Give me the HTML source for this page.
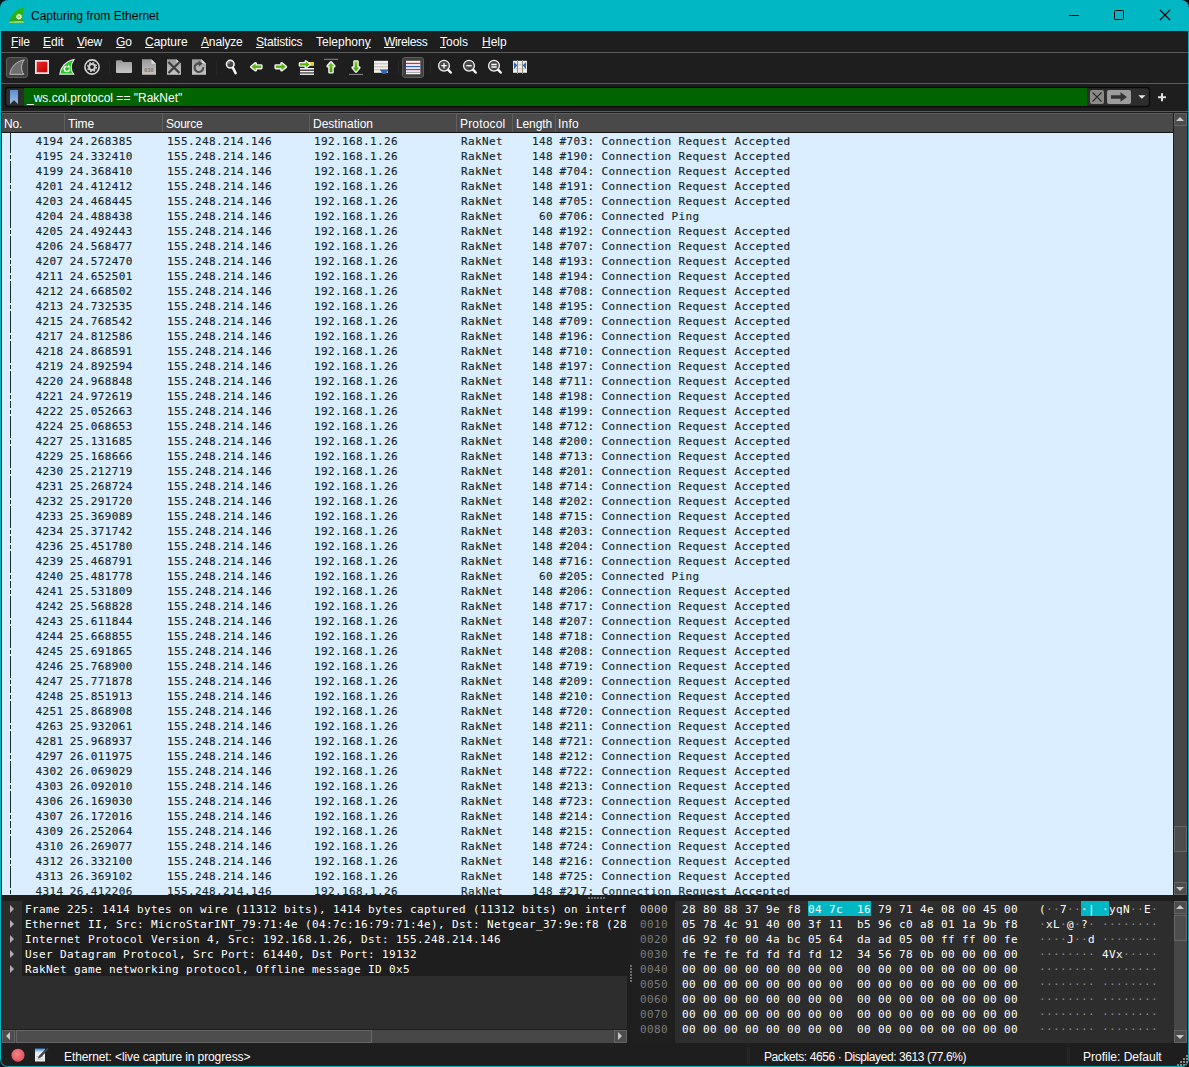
<!DOCTYPE html>
<html lang="en"><head><meta charset="utf-8"><title>Capturing from Ethernet</title>
<style>
*{box-sizing:border-box;margin:0;padding:0}
html,body{width:1189px;height:1067px;overflow:hidden;background:#04141c}
body{position:relative;font-family:"Liberation Sans",sans-serif;font-size:12px;color:#fff}
#win{position:absolute;left:0;top:0;width:1189px;height:1067px;background:#00b7c3;border-radius:8px;overflow:hidden}
#inner{position:absolute;left:1px;top:31px;width:1187px;height:1035px;background:#1e1e1e;border-radius:0 0 7px 7px}
.abs{position:absolute}
#title{position:absolute;left:31px;top:9px;font-size:12px;color:#000;line-height:15px;white-space:nowrap}
.hl{position:absolute;left:1px;width:1187px;height:1px;background:#5a5a5a}
/* menu */
#menu{position:absolute;left:0;top:31px;height:21px;width:1189px;white-space:nowrap}
#menu span{position:absolute;top:4px;line-height:14px;font-size:12px;color:#fff}
#menu u{text-decoration:underline;text-underline-offset:1px}
/* packet list */
#hdr{position:absolute;left:2px;top:113px;width:1171px;height:19px;background:#494949;box-shadow:inset 0 1px 0 #5c5c5c}
#hdr span{position:absolute;top:4px;line-height:14px;font-size:12px;color:#fff;white-space:nowrap}
#hdr i{position:absolute;top:0;width:1px;height:19px;background:#5f5f5f}
#plist{position:absolute;left:2px;top:132px;width:1171px;height:763px;background:#daeeff;overflow:hidden;border-top:1px solid #141414;padding-top:1px;
 font-family:"DejaVu Sans Mono","Liberation Mono",monospace;font-size:11px;letter-spacing:0.3774px;color:#12272e}
#rel{position:absolute;left:8px;top:0px;width:1px;height:762px;background:#1c2c34}
.r{-webkit-text-stroke:0.15px #12272e;position:relative;height:15px;line-height:15px;white-space:pre}
.r.d::before{content:"";position:absolute;left:8px;top:4px;width:1px;height:2px;background:#daeeff;box-shadow:0 6px 0 #daeeff}
.c{position:absolute;top:0}
.no{left:0;width:61.4px;text-align:right}
.tm{left:67.7px}
.src{left:165px}
.dst{left:312px}
.pr{left:459px}
.ln{left:511px;width:40px;text-align:right}
.inf{left:557.4px}
/* scrollbars */
.vsb,.hsb{position:absolute;background:#474747}
.vsb{width:13px}
.sbtn{position:absolute;background:#4d4d4d;border:1px solid #636363}
.thumb{position:absolute;background:#4d4d4d;border:1px solid #666}
.sbtn i{position:absolute;width:0;height:0}
.au{left:1px;top:3px;border-left:4px solid transparent;border-right:4px solid transparent;border-bottom:4px solid #c8c8c8}
.ad{left:1px;top:4px;border-left:4px solid transparent;border-right:4px solid transparent;border-top:4px solid #c8c8c8}
.al{left:3px;top:1px;border-top:4px solid transparent;border-bottom:4px solid transparent;border-right:4px solid #c8c8c8}
.ar{left:3px;top:1px;border-top:4px solid transparent;border-bottom:4px solid transparent;border-left:4px solid #c8c8c8}
/* details */
.mono,#det,#hex{font-family:"DejaVu Sans Mono","Liberation Mono",monospace;font-size:11px;letter-spacing:0.3774px;color:#fff}
#det{position:absolute;left:2px;top:901px;width:625px;height:128px;background:#2d2d2d;overflow:hidden}
#det .dr{position:absolute;left:20px;width:605px;height:15px;line-height:17px;background:#1e1e1e;white-space:pre;padding-left:3px;overflow:hidden}
#det .tri{position:absolute;left:8px;width:0;height:0;border-left:4.6px solid #b0b0b0;border-top:4px solid transparent;border-bottom:4px solid transparent;margin-top:-0.5px}
#hex{position:absolute;left:632px;top:901px;width:542px;height:142px;background:#2d2d2d;overflow:hidden}
#hex .off{position:absolute;left:0;top:0;width:43px;height:142px;background:#1f1f1f}
#hex .hr{position:absolute;left:0;height:15px;line-height:17px;white-space:pre}
#hex .o{position:absolute;left:8px;color:#7c7c7c}
#hex .o0{color:#cfcfcf}
#hex .h{position:absolute;left:50px}
#hex .a{position:absolute;left:407px}
#hex .d{color:#8a8a8a}
#hex .sel{background:#00b7c3;padding:2px 0 0}
#hex .sel .d{color:#fff}
#status{position:absolute;left:1px;top:1044px;width:1187px;height:22px;background:#1e1e1e;border-radius:0 0 7px 7px}
#status span{position:absolute;top:6px;line-height:14px;font-size:12px;color:#fff;white-space:nowrap}
.ssep{position:absolute;top:3px;width:1px;height:17px;background:#2b2b2b}
#ftext{position:absolute;left:27px;top:91px;line-height:14px;font-size:12px;color:#fff;white-space:nowrap}
.grip i{position:absolute;width:2px;height:2px;background:#6c6c6c}

</style></head><body>
<div id="win">
<div id="inner"></div>
<div id="title">Capturing from Ethernet</div>
<div id="menu">
<span style="left:11px;letter-spacing:-0.15px"><u>F</u>ile</span>
<span style="left:43px"><u>E</u>dit</span>
<span style="left:77px;letter-spacing:-0.2px"><u>V</u>iew</span>
<span style="left:116px"><u>G</u>o</span>
<span style="left:145px"><u>C</u>apture</span>
<span style="left:201px;letter-spacing:-0.15px"><u>A</u>nalyze</span>
<span style="left:256px;letter-spacing:-0.17px"><u>S</u>tatistics</span>
<span style="left:316px">Telephon<u>y</u></span>
<span style="left:384px;letter-spacing:-0.33px"><u>W</u>ireless</span>
<span style="left:440px"><u>T</u>ools</span>
<span style="left:482px"><u>H</u>elp</span>
</div>
<div class="hl" style="top:52px"></div>
<div class="hl" style="top:83px"></div>
<div class="hl" style="top:111px"></div>
<svg class="abs" style="left:0;top:0" width="1189" height="112" viewBox="0 0 1189 112">
<defs>
<linearGradient id="gRed" x1="0" y1="0" x2="1" y2="1"><stop offset="0" stop-color="#ee2a2a"/><stop offset="1" stop-color="#c00000"/></linearGradient>
<linearGradient id="gGrey" x1="0" y1="0" x2="0" y2="1"><stop offset="0" stop-color="#9a9a9a"/><stop offset="1" stop-color="#c6c6c6"/></linearGradient>
<linearGradient id="gGrn" x1="0" y1="0" x2="0" y2="1"><stop offset="0" stop-color="#7ed321"/><stop offset="1" stop-color="#3f9a00"/></linearGradient>
<linearGradient id="gFin" x1="0" y1="0" x2="0" y2="1"><stop offset="0" stop-color="#2cba06"/><stop offset="1" stop-color="#2ea418"/></linearGradient>
<linearGradient id="gBm" x1="0" y1="0" x2="0" y2="1"><stop offset="0" stop-color="#5d8fcc"/><stop offset="1" stop-color="#9dbde6"/></linearGradient>
</defs>
<!-- title icon -->
<path d="M24.700 7.200 C16.500 8.500 10.800 14.500 9.100 22.900 L24.100 22.900 C21.900 19 22 12 24.700 7.200 Z" fill="url(#gFin)"/>
<path d="M9.100 22.900 L24.100 22.900 L23.300 21.300 C19 20.600 13.500 21 9.700 21.600 Z" fill="#8fd47c"/>
<circle cx="19" cy="16.700" r="2.500" fill="#dff0dc" stroke="#dff0dc" stroke-width="1" stroke-dasharray="1 0.960"/>
<circle cx="19" cy="16.700" r="0.900" fill="#6cc060"/>
<!-- window buttons -->
<path d="M1069 15.5 H1079" stroke="#000" stroke-width="1"/>
<rect x="1114.5" y="10.5" width="9" height="9" rx="1" fill="none" stroke="#000" stroke-width="1"/>
<path d="M1160 10 L1170 20 M1170 10 L1160 20" stroke="#000" stroke-width="1.1"/>
<!-- toolbar: selected button 1 -->
<rect x="6.5" y="57.5" width="21" height="20" rx="2.5" fill="#404040" stroke="#5c5c5c"/>
<path d="M24.3 59.8 C15.5 61.5 10.8 67.5 9.8 74.3 L23.8 74.3 C20.6 70 20.8 64.5 24.3 59.8 Z" fill="#6e6e6e" stroke="#bcbcbc" stroke-width="1"/>
<!-- stop -->
<rect x="35" y="60" width="14" height="14" fill="#e6e6e6"/>
<rect x="36.7" y="61.7" width="10.6" height="10.6" fill="url(#gRed)"/>
<!-- restart fin -->
<path d="M74 59.5 C65.2 61.2 60.6 67.5 59.8 74.2 L73.6 74.2 C70.4 70 70.6 64.5 74 59.5 Z" fill="#20c820" stroke="#e4e4e4" stroke-width="1.2"/>
<path d="M69.6 68.6 A2.7 2.7 0 1 1 66.6 66.2" fill="none" stroke="#fff" stroke-width="1.4"/>
<path d="M68.6 64.6 L70.4 67.4 L67 67.4 Z" fill="#fff"/>
<!-- gear -->
<circle cx="92" cy="67" r="7.1" fill="none" stroke="#d6d6d6" stroke-width="1.6"/>
<circle cx="92" cy="67" r="4.4" fill="none" stroke="#cdcdcd" stroke-width="1.4" stroke-dasharray="1.73 1.73"/>
<circle cx="92" cy="67" r="2.9" fill="none" stroke="#cdcdcd" stroke-width="2"/>
<rect x="109" y="60" width="1" height="14" fill="#272727"/>
<!-- folder -->
<path d="M116 61.2 Q116 60.2 117 60.2 L121.5 60.2 L123 62 L131 62 Q132 62 132 63 L132 72 Q132 73 131 73 L117 73 Q116 73 116 72 Z" fill="url(#gGrey)"/>
<!-- file 010 -->
<path d="M142 59.3 H151.5 L156 63.8 V74.7 H142 Z" fill="url(#gGrey)"/>
<path d="M151.5 59.3 L151.5 63.8 L156 63.8 Z" fill="#dcdcdc"/>
<text x="144.2" y="72" font-family="Liberation Sans, sans-serif" font-size="5.3" letter-spacing="0.25" fill="#707070" font-weight="bold">010</text>
<!-- file X -->
<path d="M167 59.3 H176.5 L181 63.8 V74.7 H167 Z" fill="url(#gGrey)"/>
<path d="M176.500 59.3 L176.500 63.8 L181 63.8 Z" fill="#dcdcdc"/>
<path d="M168.500 62 L179.500 73 M179.500 62 L168.500 73" stroke="#3c3c3c" stroke-width="2.2"/>
<!-- file reload -->
<path d="M192 59.3 H201.5 L206 63.8 V74.7 H192 Z" fill="url(#gGrey)"/>
<path d="M201.500 59.3 L201.500 63.8 L206 63.8 Z" fill="#dcdcdc"/>
<path d="M203.200 67.200 A4.300 4.300 0 1 1 199.400 63.400" fill="none" stroke="#4c4c4c" stroke-width="2.100"/>
<path d="M198.600 60.600 L203 63.400 L198.800 66.600 Z" fill="#4c4c4c"/>
<rect x="216" y="60" width="1" height="14" fill="#272727"/>
<!-- find -->
<circle cx="230.300" cy="64.200" r="3.800" fill="#484848" stroke="#f0f0f0" stroke-width="1.600"/>
<circle cx="229" cy="62.800" r="1" fill="#8a8a8a"/>
<path d="M233 68 L235.600 73.200" stroke="#f6f6f6" stroke-width="2.600" stroke-linecap="round"/>
<!-- back / forward -->
<path d="M251.400 66.800 L255.600 63.400 L255.600 65.600 L261.200 65.600 L261.200 68 L255.600 68 L255.600 70.200 Z" fill="#58b410" stroke="#f4f4f4" stroke-width="2.800" stroke-linejoin="round" paint-order="stroke"/>
<path d="M285.800 66.800 L281.600 63.400 L281.600 65.600 L275.800 65.600 L275.800 68 L281.600 68 L281.600 70.200 Z" fill="#58b410" stroke="#f4f4f4" stroke-width="2.800" stroke-linejoin="round" paint-order="stroke"/>
<!-- goto -->
<rect x="300" y="62" width="14" height="3.500" fill="#f0f0f0"/>
<rect x="310" y="62" width="4" height="3.500" fill="#f0d020"/>
<rect x="300" y="68" width="14" height="1.600" fill="#f2f2f2"/>
<rect x="300" y="70.800" width="14" height="1.600" fill="#f2f2f2"/>
<rect x="300" y="73.500" width="14" height="1.400" fill="#f2f2f2"/>
<path d="M309.600 64.400 L305.800 61.400 L305.800 63.300 L300 63.300 L300 65.500 L305.800 65.500 L305.800 67.400 Z" fill="#58b410" stroke="#f4f4f4" stroke-width="2.600" stroke-linejoin="round" paint-order="stroke"/>
<!-- first -->
<rect x="324" y="58.800" width="14" height="1" fill="#8c8c8c"/>
<path d="M331 62.400 L334.200 66.200 L332.400 66.200 L332.400 72.200 L329.600 72.200 L329.600 66.200 L327.800 66.200 Z" fill="url(#gGrn)" stroke="#f6f6f6" stroke-width="2.800" stroke-linejoin="round" paint-order="stroke"/>
<!-- last -->
<rect x="349" y="73.900" width="14" height="1" fill="#8c8c8c"/>
<path d="M356 71.400 L359.200 67.600 L357.400 67.600 L357.400 61.600 L354.600 61.600 L354.600 67.600 L352.800 67.600 Z" fill="url(#gGrn)" stroke="#f6f6f6" stroke-width="2.800" stroke-linejoin="round" paint-order="stroke"/>
<!-- autoscroll -->
<rect x="374" y="60.800" width="14" height="12" fill="#f2f2ee"/>
<rect x="374" y="63.300" width="14" height="1" fill="#b9b9b0"/>
<rect x="374" y="66.300" width="14" height="1" fill="#b9b9b0"/>
<rect x="374" y="69.300" width="14" height="1" fill="#b9b9b0"/>
<path d="M379.800 69.500 L388 69.500 L388 71 L385.300 74 L382.600 74 Z" fill="#3465b4"/>
<rect x="398" y="60" width="1" height="14" fill="#272727"/>
<!-- colorize (selected) -->
<rect x="402.500" y="57.500" width="21" height="20" rx="2.500" fill="#404040" stroke="#5c5c5c"/>
<rect x="406" y="60.800" width="14.300" height="13.400" fill="#fafafa"/>
<rect x="406" y="62.800" width="14.300" height="1.300" fill="#ee2222"/>
<rect x="406" y="65.900" width="14.300" height="1.300" fill="#2f5fc8"/>
<rect x="406" y="68.900" width="14.300" height="1.300" fill="#8a3f9c"/>
<rect x="406" y="71.800" width="14.300" height="1" fill="#9a9a9a"/>
<rect x="430" y="60" width="1" height="14" fill="#272727"/>
<!-- zoom in/out/reset -->
<g><circle cx="444" cy="65.700" r="5.400" fill="#484848" stroke="#f2f2f2" stroke-width="1.300"/><path d="M448.200 69.900 L450.700 72.500" stroke="#f4f4f4" stroke-width="2.500" stroke-linecap="round"/></g>
<path d="M441.300 65.700 H446.700 M444 63 V68.400" stroke="#fff" stroke-width="1.300"/>
<circle cx="469" cy="65.700" r="5.400" fill="#484848" stroke="#f2f2f2" stroke-width="1.300"/><path d="M473.2 69.900 L475.7 72.500" stroke="#f4f4f4" stroke-width="2.500" stroke-linecap="round"/>
<path d="M466.300 65.700 H471.700" stroke="#fff" stroke-width="1.300"/>
<circle cx="494" cy="65.700" r="5.400" fill="#484848" stroke="#f2f2f2" stroke-width="1.300"/><path d="M498.2 69.900 L500.7 72.500" stroke="#f4f4f4" stroke-width="2.500" stroke-linecap="round"/>
<path d="M491.300 64.500 H496.700 M491.300 67 H496.700" stroke="#fff" stroke-width="1.300"/>
<!-- resize columns -->
<rect x="513" y="60.800" width="14" height="12" fill="#ecece6"/>
<path d="M513 64.800 H527 M513 68.800 H527" stroke="#c8c8c0" stroke-width="1"/>
<path d="M517.500 60 V74 M522.500 60 V74" stroke="#8c8c84" stroke-width="1"/>
<path d="M514 62 L517.300 65.500 L514 69 Z" fill="#2f66c0"/>
<path d="M526 62 L522.700 65.500 L526 69 Z" fill="#2f66c0"/>
<!-- filter bar -->
<rect x="5.500" y="87.500" width="1144" height="19" rx="3" fill="#2d2d2d" stroke="#0a0a0a" stroke-width="1.300"/>
<rect x="24" y="88" width="1063" height="18" fill="#006400"/>
<path d="M10 90.500 Q10 90 10.500 90 L17.500 90 Q18 90 18 90.500 L18 104 L14 100.300 L10 104 Z" fill="url(#gBm)"/>
<rect x="1090" y="90" width="14" height="14" rx="2" fill="#8a8a86"/>
<path d="M1092.500 92.500 L1101.500 101.500 M1101.500 92.500 L1092.500 101.500" stroke="#2a2a2a" stroke-width="1.100"/>
<rect x="1107" y="90" width="24" height="14" rx="2" fill="#9c9c9c"/>
<path d="M1111 95.300 H1120.500 V92.300 L1127 97 L1120.500 101.700 V98.700 H1111 Z" fill="#333"/>
<path d="M1138.300 95.300 H1145.500 L1141.900 98.800 Z" fill="#e6e6e6"/>
<path d="M1158 97.200 H1166 M1162 93.200 V101.200" stroke="#e0e0e0" stroke-width="2"/>
</svg>
<div id="ftext">_ws.col.protocol == "RakNet"</div>
<div id="hdr">
<span style="left:2px;letter-spacing:-0.2px">No.</span><i style="left:62px"></i>
<span style="left:66px">Time</span><i style="left:160px"></i>
<span style="left:164px;letter-spacing:-0.27px">Source</span><i style="left:307px"></i>
<span style="left:311px">Destination</span><i style="left:454px"></i>
<span style="left:458px;letter-spacing:0.16px">Protocol</span><i style="left:510px"></i>
<span style="left:514px;letter-spacing:-0.13px">Length</span><i style="left:553px"></i>
<span style="left:556px;letter-spacing:0.2px">Info</span>
</div>
<div id="plist">
<div id="rel"></div>
<div class="r"><span class="c no">4194</span><span class="c tm">24.268385</span><span class="c src">155.248.214.146</span><span class="c dst">192.168.1.26</span><span class="c pr">RakNet</span><span class="c ln">148</span><span class="c inf">#703: Connection Request Accepted</span></div>
<div class="r d"><span class="c no">4195</span><span class="c tm">24.332410</span><span class="c src">155.248.214.146</span><span class="c dst">192.168.1.26</span><span class="c pr">RakNet</span><span class="c ln">148</span><span class="c inf">#190: Connection Request Accepted</span></div>
<div class="r"><span class="c no">4199</span><span class="c tm">24.368410</span><span class="c src">155.248.214.146</span><span class="c dst">192.168.1.26</span><span class="c pr">RakNet</span><span class="c ln">148</span><span class="c inf">#704: Connection Request Accepted</span></div>
<div class="r d"><span class="c no">4201</span><span class="c tm">24.412412</span><span class="c src">155.248.214.146</span><span class="c dst">192.168.1.26</span><span class="c pr">RakNet</span><span class="c ln">148</span><span class="c inf">#191: Connection Request Accepted</span></div>
<div class="r"><span class="c no">4203</span><span class="c tm">24.468445</span><span class="c src">155.248.214.146</span><span class="c dst">192.168.1.26</span><span class="c pr">RakNet</span><span class="c ln">148</span><span class="c inf">#705: Connection Request Accepted</span></div>
<div class="r"><span class="c no">4204</span><span class="c tm">24.488438</span><span class="c src">155.248.214.146</span><span class="c dst">192.168.1.26</span><span class="c pr">RakNet</span><span class="c ln">60</span><span class="c inf">#706: Connected Ping</span></div>
<div class="r d"><span class="c no">4205</span><span class="c tm">24.492443</span><span class="c src">155.248.214.146</span><span class="c dst">192.168.1.26</span><span class="c pr">RakNet</span><span class="c ln">148</span><span class="c inf">#192: Connection Request Accepted</span></div>
<div class="r"><span class="c no">4206</span><span class="c tm">24.568477</span><span class="c src">155.248.214.146</span><span class="c dst">192.168.1.26</span><span class="c pr">RakNet</span><span class="c ln">148</span><span class="c inf">#707: Connection Request Accepted</span></div>
<div class="r d"><span class="c no">4207</span><span class="c tm">24.572470</span><span class="c src">155.248.214.146</span><span class="c dst">192.168.1.26</span><span class="c pr">RakNet</span><span class="c ln">148</span><span class="c inf">#193: Connection Request Accepted</span></div>
<div class="r d"><span class="c no">4211</span><span class="c tm">24.652501</span><span class="c src">155.248.214.146</span><span class="c dst">192.168.1.26</span><span class="c pr">RakNet</span><span class="c ln">148</span><span class="c inf">#194: Connection Request Accepted</span></div>
<div class="r"><span class="c no">4212</span><span class="c tm">24.668502</span><span class="c src">155.248.214.146</span><span class="c dst">192.168.1.26</span><span class="c pr">RakNet</span><span class="c ln">148</span><span class="c inf">#708: Connection Request Accepted</span></div>
<div class="r d"><span class="c no">4213</span><span class="c tm">24.732535</span><span class="c src">155.248.214.146</span><span class="c dst">192.168.1.26</span><span class="c pr">RakNet</span><span class="c ln">148</span><span class="c inf">#195: Connection Request Accepted</span></div>
<div class="r"><span class="c no">4215</span><span class="c tm">24.768542</span><span class="c src">155.248.214.146</span><span class="c dst">192.168.1.26</span><span class="c pr">RakNet</span><span class="c ln">148</span><span class="c inf">#709: Connection Request Accepted</span></div>
<div class="r d"><span class="c no">4217</span><span class="c tm">24.812586</span><span class="c src">155.248.214.146</span><span class="c dst">192.168.1.26</span><span class="c pr">RakNet</span><span class="c ln">148</span><span class="c inf">#196: Connection Request Accepted</span></div>
<div class="r"><span class="c no">4218</span><span class="c tm">24.868591</span><span class="c src">155.248.214.146</span><span class="c dst">192.168.1.26</span><span class="c pr">RakNet</span><span class="c ln">148</span><span class="c inf">#710: Connection Request Accepted</span></div>
<div class="r d"><span class="c no">4219</span><span class="c tm">24.892594</span><span class="c src">155.248.214.146</span><span class="c dst">192.168.1.26</span><span class="c pr">RakNet</span><span class="c ln">148</span><span class="c inf">#197: Connection Request Accepted</span></div>
<div class="r"><span class="c no">4220</span><span class="c tm">24.968848</span><span class="c src">155.248.214.146</span><span class="c dst">192.168.1.26</span><span class="c pr">RakNet</span><span class="c ln">148</span><span class="c inf">#711: Connection Request Accepted</span></div>
<div class="r d"><span class="c no">4221</span><span class="c tm">24.972619</span><span class="c src">155.248.214.146</span><span class="c dst">192.168.1.26</span><span class="c pr">RakNet</span><span class="c ln">148</span><span class="c inf">#198: Connection Request Accepted</span></div>
<div class="r d"><span class="c no">4222</span><span class="c tm">25.052663</span><span class="c src">155.248.214.146</span><span class="c dst">192.168.1.26</span><span class="c pr">RakNet</span><span class="c ln">148</span><span class="c inf">#199: Connection Request Accepted</span></div>
<div class="r"><span class="c no">4224</span><span class="c tm">25.068653</span><span class="c src">155.248.214.146</span><span class="c dst">192.168.1.26</span><span class="c pr">RakNet</span><span class="c ln">148</span><span class="c inf">#712: Connection Request Accepted</span></div>
<div class="r d"><span class="c no">4227</span><span class="c tm">25.131685</span><span class="c src">155.248.214.146</span><span class="c dst">192.168.1.26</span><span class="c pr">RakNet</span><span class="c ln">148</span><span class="c inf">#200: Connection Request Accepted</span></div>
<div class="r"><span class="c no">4229</span><span class="c tm">25.168666</span><span class="c src">155.248.214.146</span><span class="c dst">192.168.1.26</span><span class="c pr">RakNet</span><span class="c ln">148</span><span class="c inf">#713: Connection Request Accepted</span></div>
<div class="r d"><span class="c no">4230</span><span class="c tm">25.212719</span><span class="c src">155.248.214.146</span><span class="c dst">192.168.1.26</span><span class="c pr">RakNet</span><span class="c ln">148</span><span class="c inf">#201: Connection Request Accepted</span></div>
<div class="r"><span class="c no">4231</span><span class="c tm">25.268724</span><span class="c src">155.248.214.146</span><span class="c dst">192.168.1.26</span><span class="c pr">RakNet</span><span class="c ln">148</span><span class="c inf">#714: Connection Request Accepted</span></div>
<div class="r d"><span class="c no">4232</span><span class="c tm">25.291720</span><span class="c src">155.248.214.146</span><span class="c dst">192.168.1.26</span><span class="c pr">RakNet</span><span class="c ln">148</span><span class="c inf">#202: Connection Request Accepted</span></div>
<div class="r"><span class="c no">4233</span><span class="c tm">25.369089</span><span class="c src">155.248.214.146</span><span class="c dst">192.168.1.26</span><span class="c pr">RakNet</span><span class="c ln">148</span><span class="c inf">#715: Connection Request Accepted</span></div>
<div class="r d"><span class="c no">4234</span><span class="c tm">25.371742</span><span class="c src">155.248.214.146</span><span class="c dst">192.168.1.26</span><span class="c pr">RakNet</span><span class="c ln">148</span><span class="c inf">#203: Connection Request Accepted</span></div>
<div class="r d"><span class="c no">4236</span><span class="c tm">25.451780</span><span class="c src">155.248.214.146</span><span class="c dst">192.168.1.26</span><span class="c pr">RakNet</span><span class="c ln">148</span><span class="c inf">#204: Connection Request Accepted</span></div>
<div class="r"><span class="c no">4239</span><span class="c tm">25.468791</span><span class="c src">155.248.214.146</span><span class="c dst">192.168.1.26</span><span class="c pr">RakNet</span><span class="c ln">148</span><span class="c inf">#716: Connection Request Accepted</span></div>
<div class="r d"><span class="c no">4240</span><span class="c tm">25.481778</span><span class="c src">155.248.214.146</span><span class="c dst">192.168.1.26</span><span class="c pr">RakNet</span><span class="c ln">60</span><span class="c inf">#205: Connected Ping</span></div>
<div class="r d"><span class="c no">4241</span><span class="c tm">25.531809</span><span class="c src">155.248.214.146</span><span class="c dst">192.168.1.26</span><span class="c pr">RakNet</span><span class="c ln">148</span><span class="c inf">#206: Connection Request Accepted</span></div>
<div class="r"><span class="c no">4242</span><span class="c tm">25.568828</span><span class="c src">155.248.214.146</span><span class="c dst">192.168.1.26</span><span class="c pr">RakNet</span><span class="c ln">148</span><span class="c inf">#717: Connection Request Accepted</span></div>
<div class="r d"><span class="c no">4243</span><span class="c tm">25.611844</span><span class="c src">155.248.214.146</span><span class="c dst">192.168.1.26</span><span class="c pr">RakNet</span><span class="c ln">148</span><span class="c inf">#207: Connection Request Accepted</span></div>
<div class="r"><span class="c no">4244</span><span class="c tm">25.668855</span><span class="c src">155.248.214.146</span><span class="c dst">192.168.1.26</span><span class="c pr">RakNet</span><span class="c ln">148</span><span class="c inf">#718: Connection Request Accepted</span></div>
<div class="r d"><span class="c no">4245</span><span class="c tm">25.691865</span><span class="c src">155.248.214.146</span><span class="c dst">192.168.1.26</span><span class="c pr">RakNet</span><span class="c ln">148</span><span class="c inf">#208: Connection Request Accepted</span></div>
<div class="r"><span class="c no">4246</span><span class="c tm">25.768900</span><span class="c src">155.248.214.146</span><span class="c dst">192.168.1.26</span><span class="c pr">RakNet</span><span class="c ln">148</span><span class="c inf">#719: Connection Request Accepted</span></div>
<div class="r d"><span class="c no">4247</span><span class="c tm">25.771878</span><span class="c src">155.248.214.146</span><span class="c dst">192.168.1.26</span><span class="c pr">RakNet</span><span class="c ln">148</span><span class="c inf">#209: Connection Request Accepted</span></div>
<div class="r d"><span class="c no">4248</span><span class="c tm">25.851913</span><span class="c src">155.248.214.146</span><span class="c dst">192.168.1.26</span><span class="c pr">RakNet</span><span class="c ln">148</span><span class="c inf">#210: Connection Request Accepted</span></div>
<div class="r"><span class="c no">4251</span><span class="c tm">25.868908</span><span class="c src">155.248.214.146</span><span class="c dst">192.168.1.26</span><span class="c pr">RakNet</span><span class="c ln">148</span><span class="c inf">#720: Connection Request Accepted</span></div>
<div class="r d"><span class="c no">4263</span><span class="c tm">25.932061</span><span class="c src">155.248.214.146</span><span class="c dst">192.168.1.26</span><span class="c pr">RakNet</span><span class="c ln">148</span><span class="c inf">#211: Connection Request Accepted</span></div>
<div class="r"><span class="c no">4281</span><span class="c tm">25.968937</span><span class="c src">155.248.214.146</span><span class="c dst">192.168.1.26</span><span class="c pr">RakNet</span><span class="c ln">148</span><span class="c inf">#721: Connection Request Accepted</span></div>
<div class="r d"><span class="c no">4297</span><span class="c tm">26.011975</span><span class="c src">155.248.214.146</span><span class="c dst">192.168.1.26</span><span class="c pr">RakNet</span><span class="c ln">148</span><span class="c inf">#212: Connection Request Accepted</span></div>
<div class="r"><span class="c no">4302</span><span class="c tm">26.069029</span><span class="c src">155.248.214.146</span><span class="c dst">192.168.1.26</span><span class="c pr">RakNet</span><span class="c ln">148</span><span class="c inf">#722: Connection Request Accepted</span></div>
<div class="r d"><span class="c no">4303</span><span class="c tm">26.092010</span><span class="c src">155.248.214.146</span><span class="c dst">192.168.1.26</span><span class="c pr">RakNet</span><span class="c ln">148</span><span class="c inf">#213: Connection Request Accepted</span></div>
<div class="r"><span class="c no">4306</span><span class="c tm">26.169030</span><span class="c src">155.248.214.146</span><span class="c dst">192.168.1.26</span><span class="c pr">RakNet</span><span class="c ln">148</span><span class="c inf">#723: Connection Request Accepted</span></div>
<div class="r d"><span class="c no">4307</span><span class="c tm">26.172016</span><span class="c src">155.248.214.146</span><span class="c dst">192.168.1.26</span><span class="c pr">RakNet</span><span class="c ln">148</span><span class="c inf">#214: Connection Request Accepted</span></div>
<div class="r d"><span class="c no">4309</span><span class="c tm">26.252064</span><span class="c src">155.248.214.146</span><span class="c dst">192.168.1.26</span><span class="c pr">RakNet</span><span class="c ln">148</span><span class="c inf">#215: Connection Request Accepted</span></div>
<div class="r"><span class="c no">4310</span><span class="c tm">26.269077</span><span class="c src">155.248.214.146</span><span class="c dst">192.168.1.26</span><span class="c pr">RakNet</span><span class="c ln">148</span><span class="c inf">#724: Connection Request Accepted</span></div>
<div class="r d"><span class="c no">4312</span><span class="c tm">26.332100</span><span class="c src">155.248.214.146</span><span class="c dst">192.168.1.26</span><span class="c pr">RakNet</span><span class="c ln">148</span><span class="c inf">#216: Connection Request Accepted</span></div>
<div class="r"><span class="c no">4313</span><span class="c tm">26.369102</span><span class="c src">155.248.214.146</span><span class="c dst">192.168.1.26</span><span class="c pr">RakNet</span><span class="c ln">148</span><span class="c inf">#725: Connection Request Accepted</span></div>
<div class="r d"><span class="c no">4314</span><span class="c tm">26.412206</span><span class="c src">155.248.214.146</span><span class="c dst">192.168.1.26</span><span class="c pr">RakNet</span><span class="c ln">148</span><span class="c inf">#217: Connection Request Accepted</span></div>
</div>
<div class="grip"><i style="left:588px;top:897px"></i><i style="left:591px;top:897px"></i><i style="left:594px;top:897px"></i><i style="left:597px;top:897px"></i><i style="left:600px;top:897px"></i><i style="left:603px;top:897px"></i><i style="left:630px;top:965px"></i><i style="left:630px;top:968px"></i><i style="left:630px;top:971px"></i><i style="left:630px;top:974px"></i><i style="left:630px;top:977px"></i><i style="left:630px;top:980px"></i></div>
<div id="det">
<i class="tri" style="top:4px"></i><div class="dr" style="top:0px">Frame 225: 1414 bytes on wire (11312 bits), 1414 bytes captured (11312 bits) on interface \Device\NPF_{7D2C4A1B-9E3F-4B6A-8C5D-1F2E3A4B5C6D}, id 0</div>
<i class="tri" style="top:19px"></i><div class="dr" style="top:15px">Ethernet II, Src: MicroStarINT_79:71:4e (04:7c:16:79:71:4e), Dst: Netgear_37:9e:f8 (28:80:88:37:9e:f8)</div>
<i class="tri" style="top:34px"></i><div class="dr" style="top:30px">Internet Protocol Version 4, Src: 192.168.1.26, Dst: 155.248.214.146</div>
<i class="tri" style="top:49px"></i><div class="dr" style="top:45px">User Datagram Protocol, Src Port: 61440, Dst Port: 19132</div>
<i class="tri" style="top:64px"></i><div class="dr" style="top:60px">RakNet game networking protocol, Offline message ID 0x5</div>
</div>
<div class="hsb" style="left:2px;top:1030px;width:625px;height:13px"><div class="sbtn" style="left:0;top:0;width:13px;height:13px"><i class="al"></i></div><div class="thumb" style="left:14px;top:0;width:356px;height:13px"></div><div class="sbtn" style="right:0;top:0;width:13px;height:13px"><i class="ar"></i></div></div>
<div id="hex"><div class="off"></div>
<div class="hr" style="top:0px"><span class="o o0">0000</span><span class="h">28 80 88 37 9e f8 <span class="sel">04 7c  16</span> 79 71 4e 08 00 45 00</span><span class="a">(<span class="d">·</span><span class="d">·</span>7<span class="d">·</span><span class="d">·</span><span class="sel"><span class="d">·</span>| <span class="d">·</span></span>yqN<span class="d">·</span><span class="d">·</span>E<span class="d">·</span></span></div>
<div class="hr" style="top:15px"><span class="o">0010</span><span class="h">05 78 4c 91 40 00 3f 11  b5 96 c0 a8 01 1a 9b f8</span><span class="a"><span class="d">·</span>xL<span class="d">·</span>@<span class="d">·</span>?<span class="d">·</span> <span class="d">·</span><span class="d">·</span><span class="d">·</span><span class="d">·</span><span class="d">·</span><span class="d">·</span><span class="d">·</span><span class="d">·</span></span></div>
<div class="hr" style="top:30px"><span class="o">0020</span><span class="h">d6 92 f0 00 4a bc 05 64  da ad 05 00 ff ff 00 fe</span><span class="a"><span class="d">·</span><span class="d">·</span><span class="d">·</span><span class="d">·</span>J<span class="d">·</span><span class="d">·</span>d <span class="d">·</span><span class="d">·</span><span class="d">·</span><span class="d">·</span><span class="d">·</span><span class="d">·</span><span class="d">·</span><span class="d">·</span></span></div>
<div class="hr" style="top:45px"><span class="o">0030</span><span class="h">fe fe fe fd fd fd fd 12  34 56 78 0b 00 00 00 00</span><span class="a"><span class="d">·</span><span class="d">·</span><span class="d">·</span><span class="d">·</span><span class="d">·</span><span class="d">·</span><span class="d">·</span><span class="d">·</span> 4Vx<span class="d">·</span><span class="d">·</span><span class="d">·</span><span class="d">·</span><span class="d">·</span></span></div>
<div class="hr" style="top:60px"><span class="o">0040</span><span class="h">00 00 00 00 00 00 00 00  00 00 00 00 00 00 00 00</span><span class="a"><span class="d">·</span><span class="d">·</span><span class="d">·</span><span class="d">·</span><span class="d">·</span><span class="d">·</span><span class="d">·</span><span class="d">·</span> <span class="d">·</span><span class="d">·</span><span class="d">·</span><span class="d">·</span><span class="d">·</span><span class="d">·</span><span class="d">·</span><span class="d">·</span></span></div>
<div class="hr" style="top:75px"><span class="o">0050</span><span class="h">00 00 00 00 00 00 00 00  00 00 00 00 00 00 00 00</span><span class="a"><span class="d">·</span><span class="d">·</span><span class="d">·</span><span class="d">·</span><span class="d">·</span><span class="d">·</span><span class="d">·</span><span class="d">·</span> <span class="d">·</span><span class="d">·</span><span class="d">·</span><span class="d">·</span><span class="d">·</span><span class="d">·</span><span class="d">·</span><span class="d">·</span></span></div>
<div class="hr" style="top:90px"><span class="o">0060</span><span class="h">00 00 00 00 00 00 00 00  00 00 00 00 00 00 00 00</span><span class="a"><span class="d">·</span><span class="d">·</span><span class="d">·</span><span class="d">·</span><span class="d">·</span><span class="d">·</span><span class="d">·</span><span class="d">·</span> <span class="d">·</span><span class="d">·</span><span class="d">·</span><span class="d">·</span><span class="d">·</span><span class="d">·</span><span class="d">·</span><span class="d">·</span></span></div>
<div class="hr" style="top:105px"><span class="o">0070</span><span class="h">00 00 00 00 00 00 00 00  00 00 00 00 00 00 00 00</span><span class="a"><span class="d">·</span><span class="d">·</span><span class="d">·</span><span class="d">·</span><span class="d">·</span><span class="d">·</span><span class="d">·</span><span class="d">·</span> <span class="d">·</span><span class="d">·</span><span class="d">·</span><span class="d">·</span><span class="d">·</span><span class="d">·</span><span class="d">·</span><span class="d">·</span></span></div>
<div class="hr" style="top:120px"><span class="o">0080</span><span class="h">00 00 00 00 00 00 00 00  00 00 00 00 00 00 00 00</span><span class="a"><span class="d">·</span><span class="d">·</span><span class="d">·</span><span class="d">·</span><span class="d">·</span><span class="d">·</span><span class="d">·</span><span class="d">·</span> <span class="d">·</span><span class="d">·</span><span class="d">·</span><span class="d">·</span><span class="d">·</span><span class="d">·</span><span class="d">·</span><span class="d">·</span></span></div>
</div>
<div class="vsb" style="left:1174px;top:901px;height:142px"><div class="sbtn" style="left:0;top:0;width:13px;height:13px"><i class="au"></i></div><div class="thumb" style="left:0;top:14px;width:13px;height:26px"></div><div class="sbtn" style="left:0;bottom:0;width:13px;height:13px"><i class="ad"></i></div></div>
<div class="vsb" style="left:1174px;top:113px;height:782px"><div class="sbtn" style="left:0;top:0;width:13px;height:13px"><i class="au"></i></div><div class="thumb" style="left:0;top:713px;width:13px;height:26px"></div><div class="sbtn" style="left:0;bottom:0;width:13px;height:13px"><i class="ad"></i></div></div>
<div id="status">
<svg class="abs" style="left:0;top:0" width="1187" height="22" viewBox="0 0 1187 22">
<defs><radialGradient id="gRec" cx="0.45" cy="0.4" r="0.6"><stop offset="0" stop-color="#f2838a"/><stop offset="1" stop-color="#e2525c"/></radialGradient>
<linearGradient id="gPap" x1="0" y1="0" x2="0" y2="1"><stop offset="0" stop-color="#2f8be0"/><stop offset="0.32" stop-color="#e8f0f8"/><stop offset="1" stop-color="#ededed"/></linearGradient></defs>
<circle cx="17" cy="11.2" r="6.5" fill="url(#gRec)"/>
<rect x="34" y="4.5" width="10" height="13" fill="url(#gPap)"/>
<path d="M35.5 12.500 H42.500 M35.500 15 H42.500" stroke="#b8b8b8" stroke-width="0.8"/>
<path d="M46.300 3.800 L38.600 11.600 L37.300 14.200 L39.900 12.900 L47.500 5.100 Z" fill="#4a4a4a" stroke="#2c2c2c" stroke-width="0.600"/>
<g fill="#858585"><rect x="1185" y="11" width="2" height="2"/><rect x="1182" y="14" width="2" height="2"/><rect x="1185" y="14" width="2" height="2"/><rect x="1179" y="17" width="2" height="2"/><rect x="1182" y="17" width="2" height="2"/><rect x="1185" y="17" width="2" height="2"/><rect x="1176" y="20" width="2" height="2"/><rect x="1179" y="20" width="2" height="2"/><rect x="1182" y="20" width="2" height="2"/></g>
</svg>
<span style="left:63px;letter-spacing:-0.105px">Ethernet: &lt;live capture in progress&gt;</span>
<span style="left:763px;letter-spacing:-0.41px">Packets: 4656 · Displayed: 3613 (77.6%)</span>
<span style="left:1082px">Profile: Default</span>
<i class="ssep" style="left:746px"></i><i class="ssep" style="left:748px"></i>
<i class="ssep" style="left:1066px"></i><i class="ssep" style="left:1068px"></i>
</div>
</div>
</body></html>
